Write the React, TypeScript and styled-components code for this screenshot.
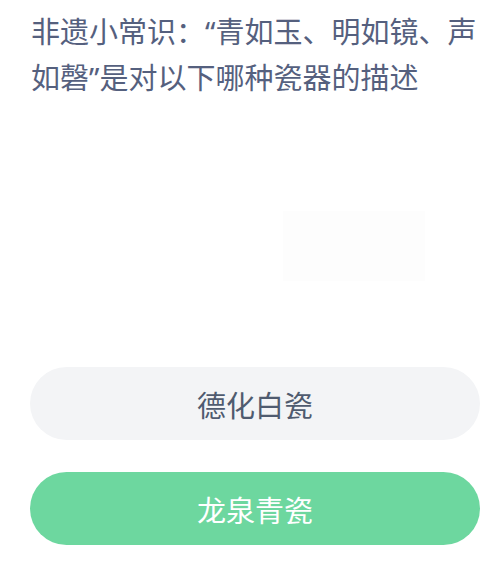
import React from "react";
import styled, { createGlobalStyle } from "styled-components";

const GlobalStyle = createGlobalStyle`
  html, body {
    margin: 0;
    padding: 0;
    background: #ffffff;
  }
  body {
    font-family: "Noto Sans", "Noto Sans CJK SC", sans-serif;
  }
`;

const Page = styled.div`
  width: 497px;
  height: 567px;
  display: flex;
  flex-direction: column;
  box-sizing: border-box;
  padding: 9px 10px 0 31px;
  overflow: hidden;
`;

const Question = styled.div`
  font-family: "Noto Sans", "Noto Sans CJK SC", sans-serif;
  font-size: 29px;
  line-height: 46px;
  color: #55607e;
  font-weight: 400;
`;

const Figure = styled.div`
  height: 266px;
  display: flex;
  align-items: center;
  justify-content: flex-end;
  padding-right: 62px;
`;

const Watermark = styled.div`
  width: 142px;
  height: 70px;
  margin-top: 24px;
  background: #fdfdfd;
`;

const Options = styled.div`
  display: flex;
  flex-direction: column;
  gap: 32px;
  margin-left: -1px;
  margin-right: 7px;
`;

const Option = styled.div<{ $selected?: boolean }>`
  height: 73px;
  border-radius: 37px;
  display: flex;
  align-items: center;
  justify-content: center;
  font-family: "Noto Sans CJK SC", sans-serif;
  font-size: 29px;
  color: ${(p) => (p.$selected ? "#ffffff" : "#4f5b6f")};
  background: ${(p) => (p.$selected ? "#6dd79f" : "#f3f4f6")};
`;

export default function App() {
  return (
    <>
      <GlobalStyle />
      <Page>
        <Question>非遗小常识：“青如玉、明如镜、声如磬”是对以下哪种瓷器的描述</Question>
        <Figure>
          <Watermark />
        </Figure>
        <Options>
          <Option>德化白瓷</Option>
          <Option $selected>龙泉青瓷</Option>
        </Options>
      </Page>
    </>
  );
}
